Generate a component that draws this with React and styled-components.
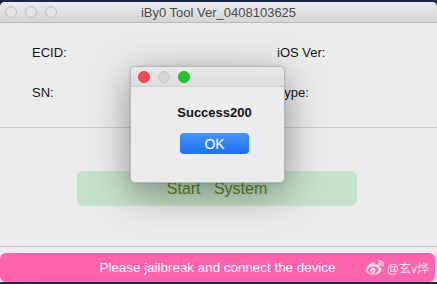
import React from 'react';
import styled, { createGlobalStyle } from 'styled-components';
import { FaWeibo } from 'react-icons/fa';

const GlobalStyle = createGlobalStyle`
	html, body {
		margin: 0;
		padding: 0;
		background: #1c2748;
		width: 437px;
		height: 284px;
		overflow: hidden;
	}
	* {
		box-sizing: border-box;
	}
`;

const Window = styled.div`
	position: relative;
	margin-top: 2px;
	width: 437px;
	height: 280px;
	background: #ececec;
	border-radius: 5px 5px 0 0;
	font-family: 'Liberation Sans', Arial, sans-serif;
	overflow: hidden;
`;

const TitleBar = styled.div`
	height: 21px;
	display: flex;
	align-items: center;
	justify-content: center;
	position: relative;
	background: linear-gradient(#ebebeb, #d5d5d5);
	border-bottom: 1px solid #b8b8b8;
	color: #4b4b4b;
	font-size: 13px;
`;

const Lights = styled.div`
	position: absolute;
	left: ${(p) => p.left}px;
	top: 50%;
	transform: translateY(-50%);
	display: flex;
	gap: 8px;
`;

const Light = styled.span`
	width: 12px;
	height: 12px;
	border-radius: 50%;
	background: ${(p) => p.color};
	border: 1px solid ${(p) => p.edge};
`;

const Body = styled.div`
	padding-top: 22px;
`;

const InfoGrid = styled.div`
	display: grid;
	grid-template-columns: 245px 1fr;
	row-gap: 24px;
	padding-left: 32px;
	font-size: 13px;
	line-height: 16px;
	color: #161616;
`;

const Divider = styled.div`
	height: 1px;
	background: #c9c9c9;
	margin-top: ${(p) => p.top}px;
`;

const ButtonRow = styled.div`
	padding: 43px 0 0 77px;
`;

const StartButton = styled.div`
	width: 280px;
	height: 35px;
	border-radius: 6px;
	background: #c6e2c9;
	color: #5b8a1c;
	font-size: 16px;
	padding-top: 1px;
	display: flex;
	align-items: center;
	justify-content: center;
	white-space: pre;
`;

const StatusBar = styled.div`
	margin-top: 6px;
	width: 435px;
	height: 29px;
	border-radius: 6px;
	background: #ff63ad;
	color: #ffffff;
	font-size: 13.4px;
	display: flex;
	align-items: center;
	justify-content: center;
	position: relative;
`;

const Watermark = styled.div`
	position: absolute;
	right: 6px;
	top: 50%;
	transform: translateY(-50%);
	display: flex;
	align-items: center;
	gap: 3px;
	color: rgba(255, 255, 255, 0.82);
	font-family: 'Liberation Sans', 'Noto Sans CJK SC', sans-serif;
	font-size: 12px;
`;

const Dialog = styled.div`
	position: absolute;
	left: 130px;
	top: 64px;
	width: 155px;
	height: 117px;
	border-radius: 5px;
	background: #ececec;
	border: 1px solid #b9b9b9;
	box-shadow: 0 10px 38px rgba(0, 0, 0, 0.4), 0 0 2px rgba(0, 0, 0, 0.2);
	overflow: hidden;
	display: flex;
	flex-direction: column;
`;

const DialogTitle = styled.div`
	height: 20px;
	position: relative;
	background: linear-gradient(#e9e9e9, #dcdcdc);
	border-bottom: 1px solid #cfcfcf;
`;

const DialogBody = styled.div`
	display: flex;
	flex-direction: column;
	align-items: center;
	padding: 18px 0 0 14px;
	gap: 12px;
`;

const Message = styled.div`
	font-size: 13px;
	font-weight: bold;
	color: #111;
	line-height: 16px;
`;

const OkButton = styled.div`
	width: 69px;
	height: 21px;
	border-radius: 4px;
	background: linear-gradient(#4796fb, #1b6ff5);
	color: #ffffff;
	font-size: 14px;
	display: flex;
	align-items: center;
	justify-content: center;
`;

const App = () => {
	return (
		<>
			<GlobalStyle />
			<Window>
				<TitleBar>
					<Lights left={5}>
						<Light color="#e4e4e4" edge="#bcbcbc" />
						<Light color="#e4e4e4" edge="#bcbcbc" />
						<Light color="#e4e4e4" edge="#bcbcbc" />
					</Lights>
					iBy0 Tool Ver_0408103625
				</TitleBar>
				<Body>
					<InfoGrid>
						<div>ECID:</div>
						<div>iOS Ver:</div>
						<div>SN:</div>
						<div>Type:</div>
					</InfoGrid>
					<Divider top={26} />
					<ButtonRow>
						<StartButton>Start   System</StartButton>
					</ButtonRow>
					<Divider top={40} />
					<StatusBar>
						Please jailbreak and connect the device
						<Watermark>
							<FaWeibo size={18} />
							@玄v烨
						</Watermark>
					</StatusBar>
				</Body>
				<Dialog>
					<DialogTitle>
						<Lights left={7}>
							<Light color="#fe4b4f" edge="#e63b3f" />
							<Light color="#d7d7d7" edge="#c4c4c4" />
							<Light color="#1ecb2f" edge="#14b025" />
						</Lights>
					</DialogTitle>
					<DialogBody>
						<Message>Success200</Message>
						<OkButton>OK</OkButton>
					</DialogBody>
				</Dialog>
			</Window>
		</>
	);
};

export default App;
